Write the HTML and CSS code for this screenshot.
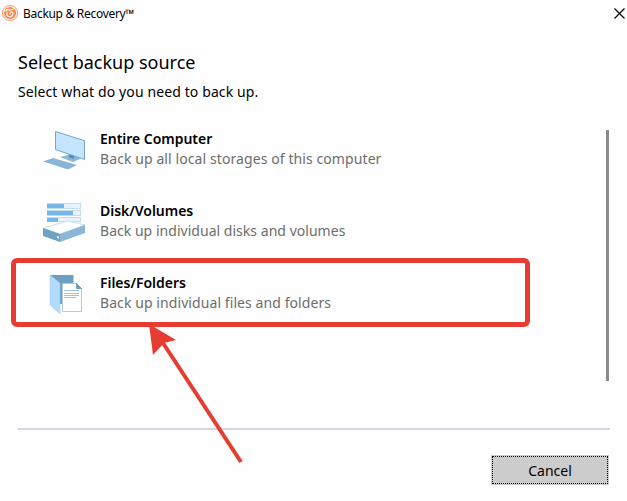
FILE: index.html
```
<!DOCTYPE html>
<html lang="en">
<head>
<meta charset="utf-8">
<title>Backup &amp; Recovery</title>
<link rel="stylesheet" href="styles.css">
</head>
<body>
<div class="window">
  <header class="titlebar">
    <svg class="logo" viewBox="0 0 18 18" width="18" height="18">
      <circle cx="9" cy="9" r="7.6" fill="#fff3ea" stroke="#f6a176" stroke-width="1"/>
      <circle cx="9" cy="9" r="6" fill="#f58a4b"/>
      <path d="M3.500 7.500Q6 4.500 9 6.200L12.500 5M6.500 8Q4.500 11 7.500 12.500Q11 13.500 12 10Q12 7.500 9.800 8Q8 9 9.500 10.300" fill="none" stroke="#fff" stroke-width="1.1"/>
    </svg>
    <span class="app-name">Backup &amp; Recovery™</span>
    <svg class="close" viewBox="0 0 11 11" width="11" height="11"><path d="M.5.5l10 10M10.5.5l-10 10" stroke="#000" stroke-width="1.15"/></svg>
  </header>
  <main class="content">
    <h1 class="heading">Select backup source</h1>
    <p class="intro">Select what do you need to back up.</p>
    <div class="sources">
      <ul class="list">
        <li class="source">
          <svg class="icon" viewBox="0 0 44 44" width="44" height="44">
            <path d="M0 32.5L10 29L34 36L25 40.5Z" fill="#8bb6d5"/>
            <path d="M17 28L27 25.5L38 29.5L30 33Z" fill="#8bb6d5"/>
            <path d="M12.5 2.5L41.5 11.7V30.5L12.5 20.5Z" fill="#c4e5ff" stroke="#72a5c8"/>
            <path d="M26 25.500l5 1.500v3l-5-1.500z" fill="#4f91bd"/>
          </svg>
          <div class="label"><strong class="name">Entire Computer</strong><span class="desc desc-computer">Back up all local storages of this computer</span></div>
        </li>
        <li class="source">
          <svg class="icon" viewBox="0 0 44 44" width="44" height="44">
            <path d="M4 2h34v6H4zM4 9h34v6H4zM4 16h34v5H4z" fill="#c0dced"/>
            <path d="M5 3h32v4H5zM5 10h32v4H5zM5 17h32v3H5z" fill="#e8f4fd"/>
            <path d="M4 3h17v4H4zM4 10h26v4H4zM4 17h11v4H4z" fill="#75b7e8"/>
            <path d="M0 27L25 20L42 24L17 33Z" fill="#fff" stroke="#c9dfed"/>
            <path d="M0 27L17 33V41L0 35Z" fill="#6fa1c5"/>
            <path d="M17 33L42 24V32L17 41Z" fill="#8bb7d6"/>
            <path d="M14 35l2 .7v2l-2-.7z" fill="#fff"/>
          </svg>
          <div class="label"><strong class="name">Disk/Volumes</strong><span class="desc desc-disk">Back up individual disks and volumes</span></div>
        </li>
        <li class="source">
          <svg class="icon" viewBox="0 0 44 44" width="44" height="44">
            <path d="M7 2H30.500V31H16Z" fill="#6e9fc3"/>
            <path d="M7 2L17 10V41L7 32Z" fill="#b1dcff" stroke="#a1cae8" stroke-width=".5"/>
            <path d="M19.500 10.500H33.500L38.500 15.500V38.500H19.500Z" fill="#fff" stroke="#b3cbdc"/>
            <path d="M33.500 10.500V15.500H38.500Z" fill="#6e9fc3" stroke="#6e9fc3"/>
            <path d="M21 17.500H36M21 20.500H36M21 22.500H36M21 24.500H33" stroke="#86b5d7" stroke-width=".8"/>
          </svg>
          <div class="label"><strong class="name">Files/Folders</strong><span class="desc desc-files">Back up individual files and folders</span></div>
        </li>
      </ul>
      <div class="scrollbar"></div>
    </div>
  </main>
  <footer class="footer"><button class="cancel"><span class="focus">Cancel</span></button></footer>
  <div class="highlight"></div>
  <svg class="arrow" viewBox="0 0 100 144" width="100" height="144">
    <path d="M18 23L96 142" stroke="#e63c31" stroke-width="4"/>
    <path d="M4 4L31 20L19 23L8 35Z" fill="#e63c31"/>
  </svg>
</div>
</body>
</html>
```
FILE: styles.css
```
* { box-sizing: border-box; }
body { margin: 0; background: #fff; font-family: "Noto Sans", "Open Sans", sans-serif; color: #000; }
.window { position: relative; width: 627px; height: 501px; overflow: hidden; display: flex; flex-direction: column; background: #fefefe; }
.titlebar { height: 28px; display: flex; align-items: center; padding: 0 2px 2px 1px; }
.app-name { margin-left: 4px; padding-top: 2px; font-size: 12px; letter-spacing: -.3px; line-height: 16px; }
.close { margin-left: auto; }
.content { height: 402px; margin: 0 17px 0 18px; padding-top: 20px; border-bottom: 2px solid #d2d6df; }
.heading { margin: 0; font-size: 18px; line-height: 28px; font-weight: 400; letter-spacing: 0; white-space: nowrap; }
.intro { margin: 5px 0 0; font-size: 14px; line-height: 22px; letter-spacing: .11px; white-space: nowrap; }
.sources { display: flex; justify-content: space-between; margin-top: 27px; }
.list { list-style: none; margin: 0; padding: 0 0 0 25px; }
.source { display: flex; height: 72px; }
.icon { flex: none; margin-right: 13px; margin-top: -1px; }
.label { display: flex; flex-direction: column; }
.name, .desc { display: block; font-size: 14px; line-height: 20px; white-space: nowrap; }
.name { font-weight: 600; letter-spacing: -.03px; margin-top: -1px; }
.desc { color: #6d6d6d; }
.desc-computer { letter-spacing: .09px; }
.desc-disk { letter-spacing: .03px; }
.desc-files { letter-spacing: .08px; }
.scrollbar { width: 3px; height: 251px; margin-right: 1px; background: #8b8b8b; }
.footer { display: flex; justify-content: flex-end; padding: 25px 18px 0 0; }
.cancel { width: 118px; height: 30px; padding: 1px; border: 0; background: #ccc; font: 14px "Noto Sans", "Open Sans", sans-serif; color: #000; }
.focus { display: flex; height: 28px; align-items: center; justify-content: center; border: 1px dotted #000; letter-spacing: 0; }
.highlight { position: absolute; left: 11px; top: 258px; width: 519px; height: 69px; border: 5px solid #e63c31; border-radius: 6px; }
.arrow { position: absolute; left: 145px; top: 320px; }
```
